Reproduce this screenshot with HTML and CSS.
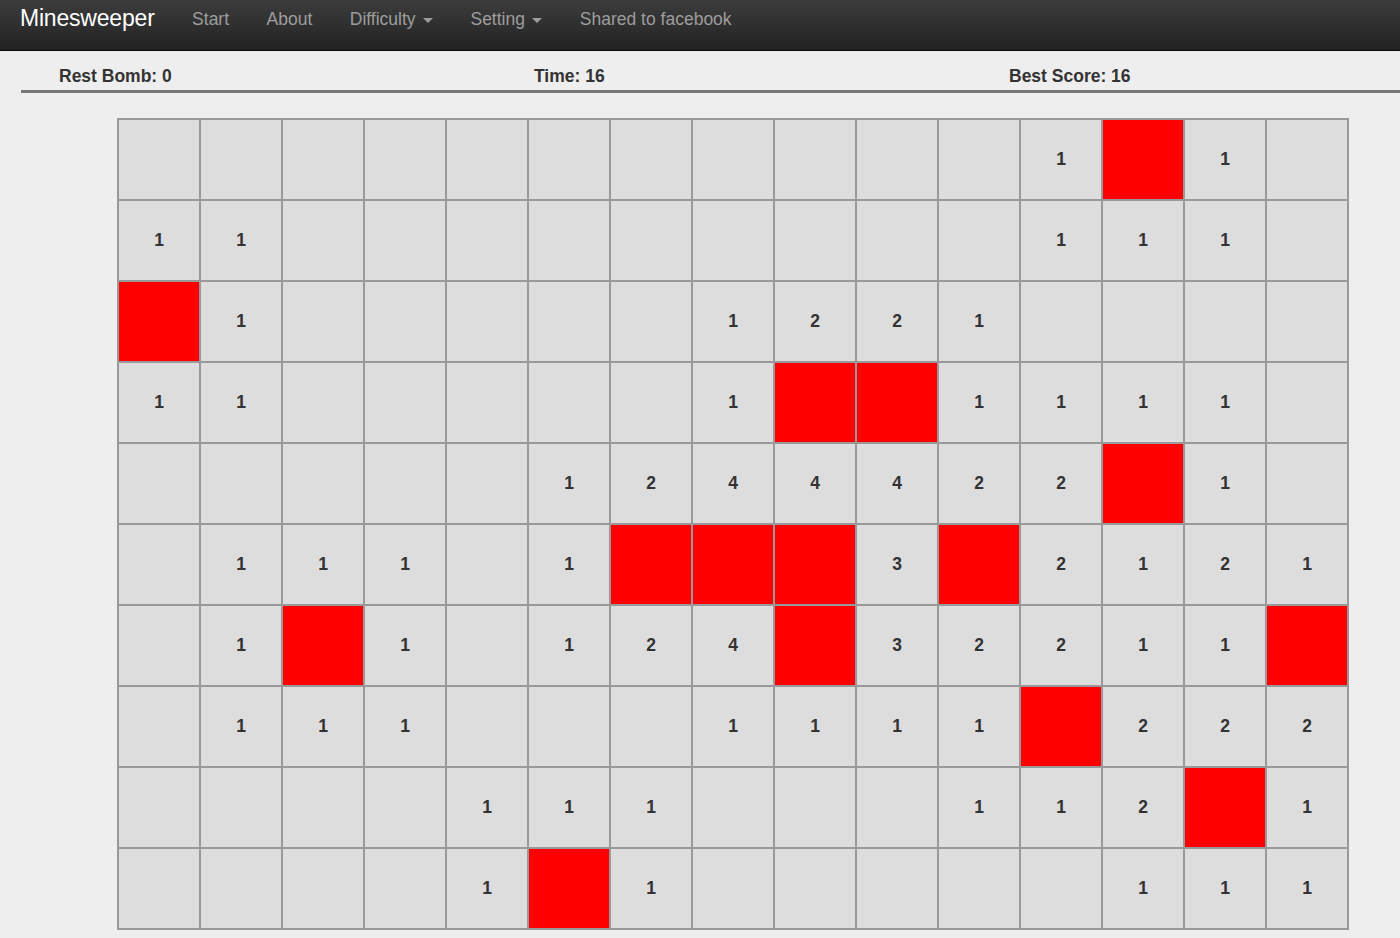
FILE: index.html
```html
<!DOCTYPE html>
<html>
<head>
<meta charset="utf-8">
<title>Minesweeper</title>
<link rel="stylesheet" href="styles.css">
</head>
<body>
<nav class="navbar">
  <a class="brand">Minesweeper</a>
  <ul class="nav">
    <li><a>Start</a></li>
    <li><a>About</a></li>
    <li><a>Difficulty <span class="caret"></span></a></li>
    <li><a>Setting <span class="caret"></span></a></li>
    <li><a>Shared to facebook</a></li>
  </ul>
</nav>
<div class="status">
  <div class="stat">Rest Bomb: 0</div>
  <div class="stat">Time: 16</div>
  <div class="stat">Best Score: 16</div>
</div>
<div class="board-wrap">
<div class="board">
  <div class="row"><div class="cell"></div><div class="cell"></div><div class="cell"></div><div class="cell"></div><div class="cell"></div><div class="cell"></div><div class="cell"></div><div class="cell"></div><div class="cell"></div><div class="cell"></div><div class="cell"></div><div class="cell">1</div><div class="cell bomb"></div><div class="cell">1</div><div class="cell"></div></div>
  <div class="row"><div class="cell">1</div><div class="cell">1</div><div class="cell"></div><div class="cell"></div><div class="cell"></div><div class="cell"></div><div class="cell"></div><div class="cell"></div><div class="cell"></div><div class="cell"></div><div class="cell"></div><div class="cell">1</div><div class="cell">1</div><div class="cell">1</div><div class="cell"></div></div>
  <div class="row"><div class="cell bomb"></div><div class="cell">1</div><div class="cell"></div><div class="cell"></div><div class="cell"></div><div class="cell"></div><div class="cell"></div><div class="cell">1</div><div class="cell">2</div><div class="cell">2</div><div class="cell">1</div><div class="cell"></div><div class="cell"></div><div class="cell"></div><div class="cell"></div></div>
  <div class="row"><div class="cell">1</div><div class="cell">1</div><div class="cell"></div><div class="cell"></div><div class="cell"></div><div class="cell"></div><div class="cell"></div><div class="cell">1</div><div class="cell bomb"></div><div class="cell bomb"></div><div class="cell">1</div><div class="cell">1</div><div class="cell">1</div><div class="cell">1</div><div class="cell"></div></div>
  <div class="row"><div class="cell"></div><div class="cell"></div><div class="cell"></div><div class="cell"></div><div class="cell"></div><div class="cell">1</div><div class="cell">2</div><div class="cell">4</div><div class="cell">4</div><div class="cell">4</div><div class="cell">2</div><div class="cell">2</div><div class="cell bomb"></div><div class="cell">1</div><div class="cell"></div></div>
  <div class="row"><div class="cell"></div><div class="cell">1</div><div class="cell">1</div><div class="cell">1</div><div class="cell"></div><div class="cell">1</div><div class="cell bomb"></div><div class="cell bomb"></div><div class="cell bomb"></div><div class="cell">3</div><div class="cell bomb"></div><div class="cell">2</div><div class="cell">1</div><div class="cell">2</div><div class="cell">1</div></div>
  <div class="row"><div class="cell"></div><div class="cell">1</div><div class="cell bomb"></div><div class="cell">1</div><div class="cell"></div><div class="cell">1</div><div class="cell">2</div><div class="cell">4</div><div class="cell bomb"></div><div class="cell">3</div><div class="cell">2</div><div class="cell">2</div><div class="cell">1</div><div class="cell">1</div><div class="cell bomb"></div></div>
  <div class="row"><div class="cell"></div><div class="cell">1</div><div class="cell">1</div><div class="cell">1</div><div class="cell"></div><div class="cell"></div><div class="cell"></div><div class="cell">1</div><div class="cell">1</div><div class="cell">1</div><div class="cell">1</div><div class="cell bomb"></div><div class="cell">2</div><div class="cell">2</div><div class="cell">2</div></div>
  <div class="row"><div class="cell"></div><div class="cell"></div><div class="cell"></div><div class="cell"></div><div class="cell">1</div><div class="cell">1</div><div class="cell">1</div><div class="cell"></div><div class="cell"></div><div class="cell"></div><div class="cell">1</div><div class="cell">1</div><div class="cell">2</div><div class="cell bomb"></div><div class="cell">1</div></div>
  <div class="row"><div class="cell"></div><div class="cell"></div><div class="cell"></div><div class="cell"></div><div class="cell">1</div><div class="cell bomb"></div><div class="cell">1</div><div class="cell"></div><div class="cell"></div><div class="cell"></div><div class="cell"></div><div class="cell"></div><div class="cell">1</div><div class="cell">1</div><div class="cell">1</div></div>
</div>
</div>
</body>
</html>
```

FILE: styles.css
```css
* { box-sizing: content-box; }
html, body {
  margin: 0;
  padding: 0;
  background: #eeeeee;
  font-family: "Liberation Sans", Arial, sans-serif;
  color: #333333;
  overflow: hidden;
}
.navbar {
  height: 50px;
  border-bottom: 1px solid #080808;
  background: linear-gradient(to bottom, #3c3c3c 0%, #222222 100%);
  display: flex;
  align-items: flex-start;
}
.brand {
  display: block;
  color: #ffffff;
  font-size: 23px;
  line-height: 25px;
  padding: 6px 18.75px 0 20px;
  letter-spacing: -0.2px;
}
.nav {
  list-style: none;
  margin: 0;
  padding: 0;
  display: flex;
}
.nav a {
  display: block;
  color: #9d9d9d;
  font-size: 17.5px;
  line-height: 25px;
  padding: 7px 18.75px 0;
}
.caret {
  display: inline-block;
  width: 0;
  height: 0;
  margin-left: 2.5px;
  vertical-align: middle;
  border-top: 5px solid #9d9d9d;
  border-left: 5px solid transparent;
  border-right: 5px solid transparent;
}
.status {
  display: flex;
  margin-left: 21px;
  padding: 13px 0 1px;
  border-bottom: 3px solid #777777;
}
.stat {
  width: 475px;
  flex: none;
  box-sizing: border-box;
  padding-left: 38px;
  font-size: 17.5px;
  font-weight: bold;
  line-height: 25px;
  color: #333333;
}
.board-wrap {
  padding: 25px 0 0 117px;
}
.board {
  display: inline-block;
  border: 1px solid #999999;
}
.row {
  display: flex;
}
.cell {
  width: 80px;
  height: 79px;
  border: 1px solid #999999;
  background: #dddddd;
  display: flex;
  align-items: center;
  justify-content: center;
  font-size: 17.5px;
  font-weight: bold;
  color: #333333;
}
.cell.bomb {
  background: #ff0000;
}
```
